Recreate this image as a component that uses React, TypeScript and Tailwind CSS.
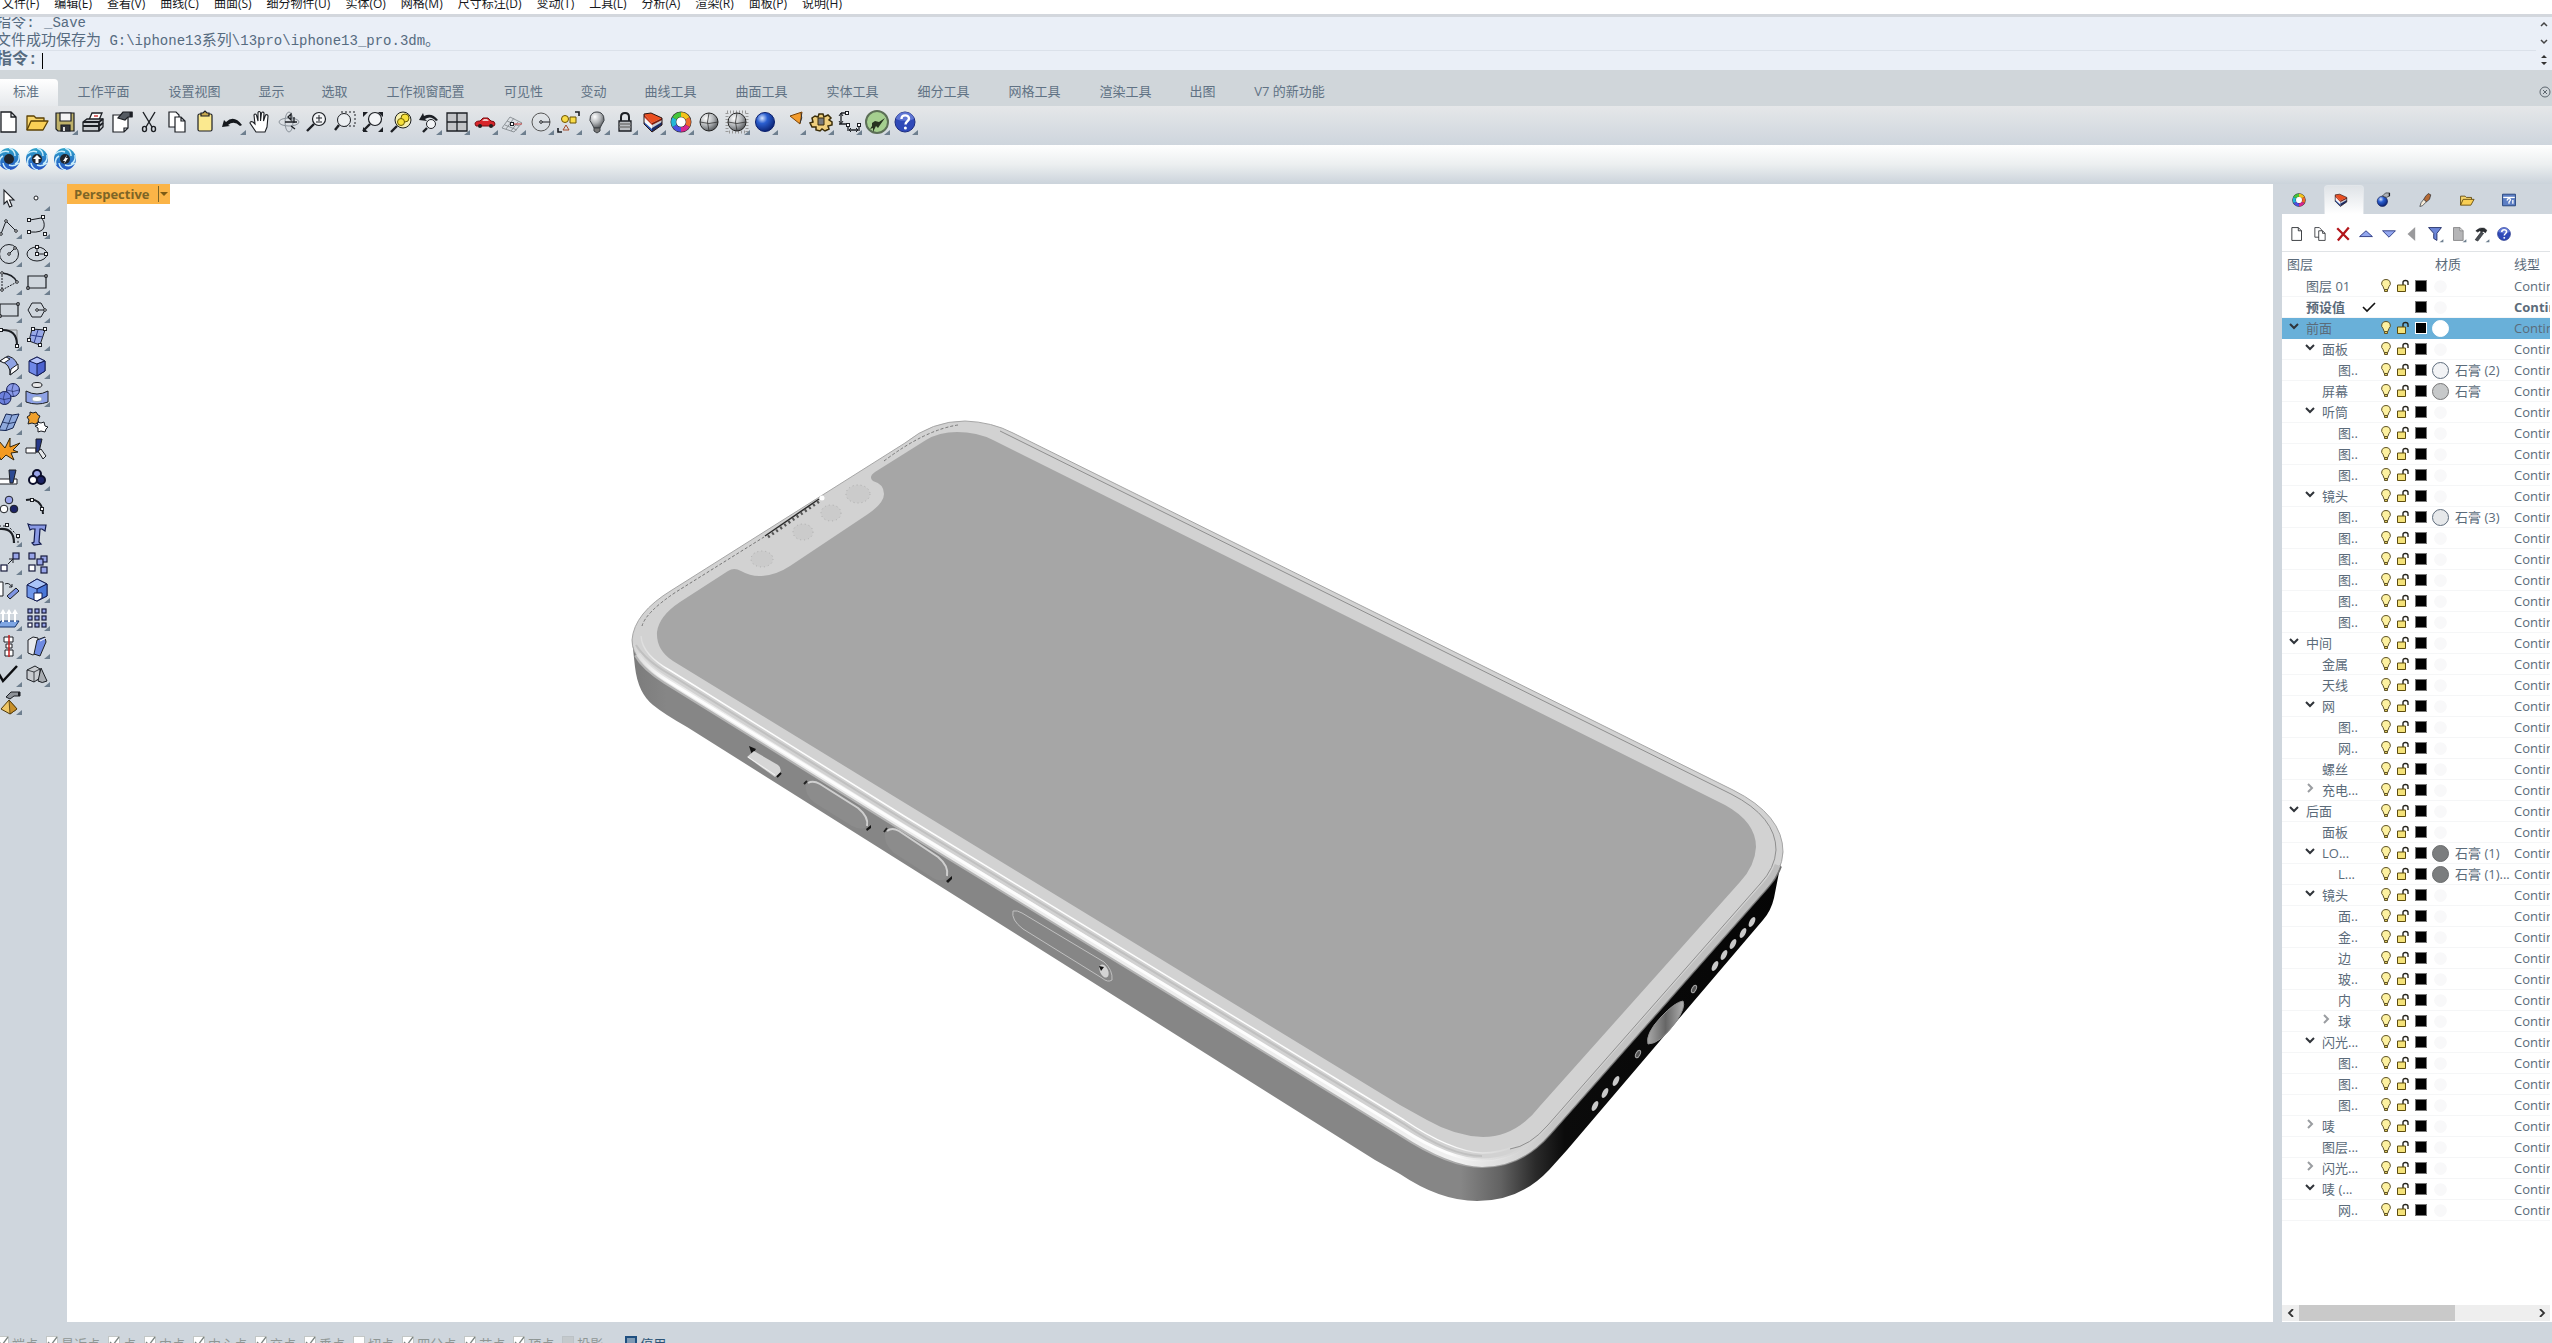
import type { ReactNode } from "react";

const INK = "#1c1f24";

type IconMap = Record<string, ReactNode>;

const page = (
  <path d="M6 4h10l5 5v15H6z M16 4v5h5" fill="#fff" stroke={INK} strokeWidth="1.3" />
);
const colorRing = (
  <g fill="none" strokeWidth="4.5">
    <circle cx="14" cy="14" r="7.5" stroke="#333" strokeWidth="6" />
    <path d="M14 6.500A7.500 7.500 0 0 1 20.500 10.250" stroke="#f3c21b" />
    <path d="M20.500 10.250A7.500 7.500 0 0 1 20.500 17.750" stroke="#ef6a2a" />
    <path d="M20.500 17.750A7.500 7.500 0 0 1 14 21.500" stroke="#d8268e" />
    <path d="M14 21.500A7.500 7.500 0 0 1 7.500 17.750" stroke="#4c4fe0" />
    <path d="M7.500 17.750A7.500 7.500 0 0 1 7.500 10.250" stroke="#25b7d8" />
    <path d="M7.500 10.250A7.500 7.500 0 0 1 14 6.500" stroke="#45c53a" />
    <circle cx="14" cy="14" r="4.500" fill="#fff" stroke="none" />
  </g>
);
const layersIcon = (
  <g strokeLinejoin="round">
    <path d="M5 6l8 9v9l-8-8z" fill="#2c55ae" />
    <path d="M5 6l8 9v6l-8-7z" fill="#f6f6f8" />
    <path d="M5 6l8 9v2l-8-8z" fill="#c63316" />
    <path d="M13 15l10-5v7l-10 7z" fill="#1c2c66" />
    <path d="M13 15l10-5v4l-10 6z" fill="#c9ccd4" />
    <path d="M13 15l10-5v2l-10 5z" fill="#7e1a0a" />
    <path d="M5 6l7-1 11 5-10 5z" fill="#ea4f20" />
    <path d="M5 6l7-1 11 5v7l-10 7-8-8z" fill="none" stroke="#2a1512" />
  </g>
);
const folder = (
  <g stroke="#5c4205" strokeWidth="1.3" strokeLinejoin="round">
    <path d="M4 22V8h7l2 2h8v3" fill="#f7d56b" />
    <path d="M4 22l4-9h17l-5 9z" fill="#f9cf55" />
  </g>
);
const helpBall = (
  <g>
    <circle cx="14" cy="14" r="10" fill="#2f49b8" stroke="#1b2c80" />
    <path d="M5 11a9 7 0 0 1 18 0a14 8 0 0 1-18 0z" fill="#7f93e6" opacity=".6" />
    <path d="M10.500 11c0-5 7.500-4.500 7.500-.500 0 3-3.500 2.500-3.500 6" fill="none" stroke="#fff" strokeWidth="2.400" />
    <circle cx="14.400" cy="20" r="1.500" fill="#fff" />
  </g>
);
const shadedBall = (
  <g>
    <circle cx="14" cy="14" r="9" fill="url(#ballGray)" stroke="#222" />
    <path d="M5 14q9 3 18 0M14 5q-3 9 0 18" fill="none" stroke="#333" strokeWidth=".8" />
  </g>
);
const lens = (
  <g fill="none" stroke={INK}>
    <circle cx="16" cy="11" r="6.500" fill="#f2f4f6" strokeWidth="1.200" />
    <path d="M11 16l-7 7" strokeWidth="2.400" />
  </g>
);
const aperture = (hub: ReactNode) => (
  <g>
    <circle cx="14" cy="14" r="11" fill="url(#apertureBlue)" />
    <path
      d="M14 3q6 2 6 8M24 10q1 6-4 9M24 18q-5 4-10 2M15 25q-6-1-7-7M5 20q-2-6 3-9M4 9q5-4 10-2"
      fill="none"
      stroke="#c8ecfb"
      strokeWidth="1.500"
    />
    <circle cx="14" cy="14" r="5" fill="#20262e" />
    {hub}
  </g>
);
const node = (x: number, y: number) => (
  <rect key={`${x}-${y}`} x={x - 1.5} y={y - 1.5} width="3" height="3" fill="#fff" stroke={INK} />
);
const dot = (x: number, y: number) => (
  <circle key={`${x}-${y}`} cx={x} cy={y} r="1.300" fill="#fff" stroke={INK} />
);
const cell = (x: number, y: number, fill: string, size = 5) => (
  <rect key={`${x}-${y}`} x={x} y={y} width={size} height={size} fill={fill} stroke="#161a3c" strokeWidth="1.200" />
);

const icons: IconMap = {
  new: page,
  open: folder,
  save: (
    <g stroke={INK} strokeWidth="1.200">
      <path d="M5 5h18v18H7l-2-2z" fill="#bfb26a" />
      <path d="M9 5h11v8H9z" fill="#f4f4f4" />
      <path d="M10 17h9v6h-9z" fill="#33363c" />
      <path d="M12 19h2v4h-2z" fill="#ddd" stroke="none" />
    </g>
  ),
  print: (
    <g stroke={INK} strokeWidth="1.300">
      <path d="M10 12l3-7h10l-3 7z" fill="#fff" />
      <path d="M15 8h4" stroke="#c22" />
      <path d="M4 14l4-3h16v8l-4 4H4z" fill="#c8ccd0" />
      <path d="M4 14h16v9M20 14l4-3M4 18h16l4-3" fill="none" strokeWidth="1.800" />
    </g>
  ),
  props: (
    <g stroke={INK} strokeWidth="1.200">
      <path d="M6 7h15v13l-4 4H6z M21 20h-4v4" fill="#fff" />
      <path d="M11 10l5-6h9v5h-4l-3 3z" fill="#555b62" />
      <path d="M24 4v5" strokeWidth="3" />
    </g>
  ),
  cut: (
    <g fill="none" stroke={INK} strokeWidth="1.400">
      <path d="M8 4l9 15M20 4l-9 15" />
      <ellipse cx="9.500" cy="21" rx="2" ry="2.600" />
      <ellipse cx="18.500" cy="21" rx="2" ry="2.600" />
    </g>
  ),
  copy: (
    <g fill="#fff" stroke={INK} strokeWidth="1.200">
      <path d="M6 4h7l3 3v12H6z" />
      <path d="M12 9h6l4 4v11H12z M18 9v4h4" />
    </g>
  ),
  paste: (
    <g stroke={INK} strokeWidth="1.200">
      <rect x="7" y="6" width="14" height="17" rx="1.500" fill="#fbe98f" />
      <path d="M10 8V5h2l2-2 2 2h2v3z" fill="#c9a94e" />
    </g>
  ),
  undo: <path d="M3 19l2-7 2 2q8-8 16 3l-2 1q-6-6-12-1l2 1z" fill="#15181d" />,
  hand: (
    <path
      d="M9 24l-6-9q0-2 3-1l2 2L7 7q1-2 2.500 0l1.500 6V4.500q1-2 2.500 0V13l1-8q1.500-2 2.500 0l-.5 8 2-6q2-1 2.500 1L20 19l-2 5z"
      fill="#fff"
      stroke={INK}
      strokeWidth="1.100"
    />
  ),
  rotate: (
    <g fill="none" stroke="#8b939b">
      <ellipse cx="14" cy="14" rx="10" ry="4" />
      <ellipse cx="14" cy="14" rx="4" ry="10" />
      <path d="M13 9l3-3v6zM19 15v-6M16 18l4 3M10 14h12" stroke={INK} strokeWidth="1.300" />
    </g>
  ),
  zoomInOut: (
    <g>
      {lens}
      <path d="M13 10h6M16 7v6M13 14h6" stroke={INK} />
    </g>
  ),
  zoomWindow: (
    <g>
      <path d="M10 4h14v14H12" fill="none" stroke={INK} strokeDasharray="2 2" />
      <g fill="none" stroke={INK}>
        <circle cx="13" cy="12" r="6.500" fill="#eceff2" />
        <path d="M8 17l-4 5" strokeWidth="2.400" />
      </g>
    </g>
  ),
  zoomExtents: (
    <g>
      {lens}
      <path d="M4 4h5L4 9zM24 4v5l-5-5zM24 24h-5l5-5zM4 24v-5l5 5z" fill={INK} />
    </g>
  ),
  zoomSelected: (
    <g>
      <g fill="none" stroke={INK}>
        <circle cx="16" cy="12" r="8" fill="#f6efae" />
        <path d="M10 18l-6 6" strokeWidth="2.400" />
      </g>
      <g fill="#f7e03a" stroke="#6b5c00">
        <circle cx="18" cy="10" r="4" />
        <circle cx="14" cy="14" r="3.500" />
      </g>
    </g>
  ),
  zoomBack: (
    <g fill="none" stroke={INK}>
      <path d="M4 12l4-7 1 3q8-4 14 4l-2 1q-5-6-11-2l2 2z" fill={INK} stroke="none" />
      <circle cx="16" cy="16" r="4.500" fill="#f2f4f6" />
      <path d="M12 20l-4 4" strokeWidth="2.400" />
    </g>
  ),
  fourViews: (
    <g stroke={INK} strokeWidth="1.300">
      <path d="M4 5h20v18H4z" fill="#c3c5c8" />
      <path d="M14 5v18M4 14h20" />
    </g>
  ),
  car: (
    <g>
      <path d="M4 16q0-3 5-3l3-3h5l3 3q4 0 4 3l-1 2H5z" fill="#d8262b" stroke="#7a0d11" />
      <path d="M11 13l2-2h3l2 2z" fill="#f3c9c9" />
      <circle cx="9" cy="18" r="2" fill="#222" />
      <circle cx="20" cy="18" r="2" fill="#222" />
    </g>
  ),
  cplane: (
    <g fill="none" stroke="#8e9499">
      <path d="M3 20l8-11 12 6-8 9zM6 17l12 5M8 13l12 5M7 21l8-11M12 23l7-9" />
      <path d="M14 16h9" stroke="#c44" />
      {node(13, 16)}
    </g>
  ),
  setRadius: (
    <g fill="none" stroke="#555">
      <circle cx="14" cy="14" r="9" />
      <path d="M14 14h9" stroke={INK} />
      {dot(14, 14)}
    </g>
  ),
  selection: (
    <g stroke="#6b5200">
      <circle cx="10" cy="11" r="3.500" fill="#f9dc49" />
      <path d="M15 9h6v6h-6z" fill="#f9dc49" />
      <path d="M11 17l3 5H8z" fill="none" stroke="#a54a2a" />
      <path d="M20 4h4v4M3 20v4h4" fill="none" stroke={INK} strokeWidth="1.600" />
    </g>
  ),
  bulb: (
    <g stroke="#3c4045">
      <path d="M14 4a7 7 0 0 1 5 12l-2 4h-6l-2-4a7 7 0 0 1 5-12z" fill="url(#ballGray)" />
      <path d="M11 20h6v3l-3 2-3-2z" fill="#777" />
    </g>
  ),
  padlock: (
    <g stroke={INK} strokeWidth="1.300">
      <path d="M10 13V9q0-4 4-4t4 4v4" fill="none" strokeWidth="2" />
      <path d="M8 13h12v10H8z" fill="#b9bcc0" />
      <path d="M8 16h12M8 19h12" stroke="#777" />
    </g>
  ),
  layers: layersIcon,
  ring: colorRing,
  shaded: shadedBall,
  shadedSel: (
    <g>
      <path d="M4 4h20v20H4z" fill="none" stroke="#999" strokeDasharray="1 2" strokeWidth="3" />
      {shadedBall}
    </g>
  ),
  rendered: <circle cx="14" cy="14" r="9.500" fill="url(#ballBlue)" stroke="#0b1f6d" />,
  spot: (
    <g>
      <path d="M11 8l12-4-2 12z" fill="#f39c2d" stroke="#7b4306" />
      <path d="M22 5q2 5-1 10" fill="none" stroke="#333" />
    </g>
  ),
  gear: (
    <g>
      <path
        d="M12 6h4l1 3 4-2 3 3-2 2 3 2v3l-4 1 1 3-4 2-3-2-2 2-4-1v-3H5l-2-4 3-1-1-4 3-2 3 1z"
        fill="#efcf7d"
        stroke="#3a2d0a"
        strokeWidth="1.500"
      />
      <path d="M11 10h6v7h-6z" fill="#77797c" stroke="#3a2d0a" />
    </g>
  ),
  dims: (
    <g fill="none" stroke={INK}>
      <path d="M6 5h6M6 5v11M13 17v6M24 17v6M4 16h9M14 22h9" strokeWidth="1.300" />
      <path d="M4 8l2-3 2 3M4 13l2 3 2-3M16 20l-2 2 2 2M21 20l2 2-2 2" />
      {node(12, 5)}
      {node(13, 17)}
      {node(24, 17)}
    </g>
  ),
  grasshopper: (
    <g>
      <circle cx="14" cy="14" r="11" fill="#a5cf8f" stroke="#5c6f56" strokeWidth="2" />
      <path d="M9 15l3-2 4 1 6-4-5 7-2 3-2-2-3 6v-4l-3 1 2-3z" fill="#26331f" />
    </g>
  ),
  help: helpBall,
  vrayA: aperture(null),
  vrayB: aperture(<path d="M14 10l4 4h-2.500v4h-3v-4H10z" fill="#fff" />),
  vrayC: aperture(<path d="M16 10l-4 6h2l-1 3 4-6h-2z" fill="#fff" />),

  cursor: <path d="M9 6v14l3-3 2.500 6 2.500-1-2.500-6h4.500z" fill="#fff" stroke={INK} strokeWidth="1.100" />,
  point: (
    <circle cx="13" cy="14" r="2" fill="#fff" stroke={INK} />
  ),
  polyline: (
    <g fill="none" stroke={INK}>
      <path d="M6 22l5-13 10 10" />
      {dot(6, 22)}
      {dot(11, 9)}
      {dot(21, 19)}
    </g>
  ),
  curve: (
    <g fill="none" stroke={INK}>
      <path d="M7 8l11-2q4 3 3 9-1 6-14 5" />
      {node(6, 8)}
      {node(20, 5)}
      {node(6, 20)}
      {node(22, 22)}
    </g>
  ),
  circle: (
    <g fill="none" stroke={INK}>
      <circle cx="14" cy="14" r="9.500" />
      <path d="M14 14l6-6" />
      {dot(14, 14)}
      {dot(20, 8)}
    </g>
  ),
  ellipse: (
    <g fill="none" stroke={INK}>
      <ellipse cx="14" cy="14" rx="10" ry="7" />
      <path d="M14 7v7h9" />
      {node(14, 7)}
      {node(14, 14)}
      {node(23, 14)}
    </g>
  ),
  arc: (
    <g fill="none" stroke={INK}>
      <path d="M7 5q11 1 15 9" strokeWidth="1.500" />
      <path d="M22 14L7 22V5" strokeDasharray="2 1" />
      {dot(7, 5)}
      {dot(22, 14)}
      {dot(7, 22)}
    </g>
  ),
  rect: (
    <g fill="none" stroke={INK} strokeWidth="1.200">
      <path d="M5 8h18v12H5z" />
      {dot(23, 8)}
      {dot(5, 20)}
    </g>
  ),
  polygon: (
    <g fill="none" stroke={INK}>
      <path d="M5 14l4-7h9l4 7-4 7H9z" />
      <path d="M14 14h8" />
      {dot(14, 14)}
      {dot(22, 14)}
    </g>
  ),
  fillet: (
    <g fill="none" stroke={INK}>
      <path d="M6 6h16v16" stroke="#888" />
      <path d="M6 6q16-1 16 15" strokeWidth="2" />
      {node(6, 6)}
      {node(22, 22)}
    </g>
  ),
  surface: (
    <g stroke={INK}>
      <path d="M9 5l13 1-5 15-11-4z" fill="#98a8e6" />
      <path d="M15 6l-4 13M7 11l13 2" stroke="#2b3a8a" />
      {node(10, 5)}
      {node(22, 5)}
      {node(6, 16)}
      {node(17, 21)}
    </g>
  ),
  sweep: (
    <g stroke={INK}>
      <path d="M5 9l8-5q10 3 10 13l-8 6q1-11-10-14z" fill="#8fa3e4" />
      <path d="M5 9l6-4 4 2-6 4zM16 17l7-5v5l-8 6z" fill="#fff" />
    </g>
  ),
  box: (
    <g stroke="#131c52">
      <path d="M6 9l8-4 8 4v10l-8 5-8-4z" fill="#6f88e8" />
      <path d="M6 9l8-4 8 4-8 3z" fill="#b8c6fa" />
      <path d="M14 12l8-3v10l-8 5z" fill="#4d63cf" />
    </g>
  ),
  spheres: (
    <g stroke="#131c52">
      <circle cx="18" cy="10" r="6.500" fill="#8a9ae8" />
      <circle cx="9.500" cy="18" r="6.500" fill="#6c80dc" />
      <path d="M3 18q6 3 13 0M10 11.500q-3 6 0 13M12 10q6 3 12 0M18.500 3.500q-3 6 0 13" fill="none" strokeWidth=".6" />
    </g>
  ),
  cylinder: (
    <g stroke={INK}>
      <ellipse cx="14" cy="5" rx="5" ry="2.500" fill="#e8e8e8" />
      <path d="M3 11q11 6 22 0v11q-11 4-22 0z" fill="#8ea2e6" />
      <ellipse cx="14" cy="19" rx="5" ry="2.500" fill="#fff" stroke="#9ab" />
    </g>
  ),
  meshPatch: (
    <g stroke="#12224e" fill="#8ea9dc">
      <path d="M11 6q6 2 13 0l-6 14q-7 4-14 2z" />
      <path d="M17 7l-6 15M7 14q7 3 14 0" fill="none" strokeWidth=".8" />
    </g>
  ),
  puzzle: (
    <g stroke={INK}>
      <path d="M7 4l3 1 3-1 2 3 2 1-2 4 1 3-4 1-3-1-4 1 1-4-2-3 3-2z" fill="#f0a02b" />
      <path d="M14 14l4 1 3-1 1 4 3 1-2 2-1 3-4-1-3 1v-4l-3-2 3-1z" fill="#fff" />
    </g>
  ),
  explode: <path d="M4 5l6 7 5-10v9l10-4-7 7 5 2-7 1 3 7-8-5-5 5-4-8z" fill="#f39a22" stroke="#2f2208" />,
  joinBlue: (
    <g stroke={INK}>
      <path d="M3 12h10v5H3z" fill="#fff" />
      <path d="M13 3h6l-3 13h-3z" fill="#26388a" />
      <path d="M15 15l3-2 5 7-3 3z" fill="#e6e8ea" />
    </g>
  ),
  trim: (
    <g stroke={INK}>
      <path d="M4 15h18v5H4z" fill="#fff" />
      <path d="M14 6h7l-3 13h-3z" fill="#2c4a92" />
    </g>
  ),
  group: (
    <g stroke="#0c0f2c" strokeWidth="2">
      <circle cx="14" cy="10" r="4" fill="#9aa5ea" />
      <circle cx="18" cy="16" r="4" fill="#1d2466" />
      <circle cx="10" cy="16" r="4" fill="#fff" />
    </g>
  ),
  ungroup: (
    <g stroke={INK}>
      <circle cx="14" cy="8" r="3.800" fill="#9aa5ea" />
      <circle cx="9" cy="17" r="3.800" fill="#fff" />
      <circle cx="19" cy="17" r="3.800" fill="#1d2466" />
    </g>
  ),
  editPts: (
    <g fill="none" stroke={INK}>
      <path d="M3 8q16-3 17 14" strokeWidth="2" />
      {node(9, 8)}
      {node(19, 17)}
    </g>
  ),
  ctrlPts: (
    <g fill="none" stroke={INK}>
      <path d="M5 9q14-1 14 14" strokeWidth="2.200" />
      <path d="M4 6h9l10 10v9" strokeDasharray="2 2" />
      {node(12, 5)}
      {node(23, 16)}
    </g>
  ),
  text: (
    <path
      d="M5 4l3 1h15l-1 6-3-2h-2l-1 13 2 2-7 1-2-2 2-1 1-13H9l-2 1z"
      fill="#8a9ae4"
      stroke="#111a4c"
      strokeWidth="1.200"
    />
  ),
  move: (
    <g>
      {cell(18, 5, "#98a5e8", 6)}
      {cell(6, 17, "#fff", 6)}
      <path d="M13 16l5-5m-4 0h4v4" fill="none" stroke={INK} />
    </g>
  ),
  copies: (
    <g>
      {cell(6, 5, "#98a5e8", 6)}
      {cell(18, 8, "#98a5e8", 6)}
      {cell(14, 11, "#98a5e8", 6)}
      {cell(6, 17, "#fff", 6)}
      {cell(18, 19, "#98a5e8", 6)}
    </g>
  ),
  orient: (
    <g stroke={INK}>
      <path d="M4 6h4v14H4z" fill="#fff" />
      <path d="M10 8q4-2 7 3m-3 0h3V8" fill="none" />
      <path d="M12 20l9-8 3 3-9 8z" fill="#7f95e2" />
    </g>
  ),
  boxEdit: (
    <g stroke="#131c52">
      <path d="M4 9l10-6 10 5v12l-10 5-10-4z" fill="#6f97ea" />
      <path d="M4 9l10-6 10 5-10 5z" fill="#a9c4f8" />
      <path d="M14 13l10-5v12l-10 5z" fill="#4876d8" />
      <path d="M11 17h8v5l-5 3-3-1z" fill="#fff" />
    </g>
  ),
  extrude: (
    <g>
      <path d="M6 17h18l-4 6H3z" fill="#7ea6e4" stroke="#13336e" />
      <path d="M8 18V9M14 18V9M20 18V9" stroke="#fff" strokeWidth="2" />
      <path d="M5 10l3-5 3 5zM11 10l3-5 3 5zM17 10l3-5 3 5z" fill="#fff" />
    </g>
  ),
  array: (
    <g>
      {[5, 12, 19].map((y) => [5, 12, 19].map((x) => cell(x, y, x === 5 && y === 19 ? "#fff" : "#98a5e8", 4)))}
    </g>
  ),
  align: (
    <g stroke={INK}>
      <path d="M9 5h9v5H9zM11 12h6v4h-6zM10 18h8v6h-8z" fill="#fff" />
      <path d="M14 3v22" stroke="#c92020" strokeWidth="1.500" />
    </g>
  ),
  shear: (
    <g stroke={INK}>
      <path d="M5 8l5-3 5 1v14l-5 3-5-2z" fill="#e8eaee" />
      <path d="M14 8l8-3 1 5-6 14-6-2z" fill="#6f8be2" />
      <path d="M17 9l6-3" stroke="#fff" />
    </g>
  ),
  check: <path d="M4 14l4 7L22 6" fill="none" stroke="#0c0d10" strokeWidth="2.500" />,
  solids: (
    <g stroke={INK}>
      <path d="M4 10l8-4 5 3v9l-6 4-7-3z" fill="#c9ccd0" />
      <path d="M4 10l7 2 6-3M11 12v10" fill="none" strokeWidth=".8" />
      <path d="M18 8l6 13q-5 3-9 0z" fill="#a9adb2" />
    </g>
  ),
  pyramid: (
    <g>
      <path d="M6 21l8-9 8 9-7 5z" fill="#f0c766" stroke="#4d370a" />
      <path d="M14 12l8 9-7 5z" fill="#c8902a" stroke="#4d370a" strokeWidth=".8" />
      <path d="M11 9l5-5h9v4h-6l-4 3z" fill="#8d9298" stroke={INK} />
      <path d="M24 4v4" stroke={INK} strokeWidth="2" />
    </g>
  ),

  material: (
    <g>
      <circle cx="13" cy="16" r="8" fill="url(#ballBlue)" stroke="#101b55" />
      <path d="M13 8l5-5h6v5l-5 2z" fill="#aeb2b7" stroke={INK} />
      <path d="M24 3v5" stroke={INK} strokeWidth="2" />
    </g>
  ),
  brush: (
    <g stroke={INK}>
      <path d="M19 4l4 2-2 7-5 4-4-4 3-5z" fill="#b56a35" />
      <path d="M12 13l4 4-6 6-4 1 2-6z" fill="#f4ead8" />
    </g>
  ),
  helpPane: (
    <g>
      <path d="M4 5h20v18H4z" fill="#5d7fc4" stroke="#26467f" strokeWidth="1.500" />
      <path d="M5 10h18" stroke="#fff" strokeWidth="2" />
      <path d="M11 15q1-4 4-3t-1 5v3M20 14v6" stroke="#fff" fill="none" strokeWidth="2" />
    </g>
  ),
  del: <path d="M5 5l18 18M23 4L6 24" stroke="#b3161b" strokeWidth="3.500" />,
  up: <path d="M4 18l10-9 10 9z" fill="#93a7ee" stroke="#1c2a78" strokeWidth="1.300" />,
  down: <path d="M4 9h20l-10 10z" fill="#93a7ee" stroke="#1c2a78" strokeWidth="1.300" />,
  left: <path d="M19 3v22L7 14z" fill="#9a9a9c" />,
  filter: <path d="M4 4h20l-7 9v11l-5-3v-8z" fill="#6d87d8" stroke="#16225c" strokeWidth="1.300" />,
  pageGray: <path d="M7 4h10l5 5v15H7z M17 4v5h5" fill="#b5b5b7" stroke="#7f8082" strokeWidth="1.300" />,
  hammer: (
    <g stroke={INK}>
      <path d="M6 9q6-6 13-4l4 3-2 4-3-2-3 1-3-2-3 2z" fill="#2a2d31" />
      <path d="M14 11l4 2-9 12-4-2z" fill="#4b5056" />
    </g>
  ),
};

const Glyph = ({ name, size = 28, corner = false }: { name: string; size?: number; corner?: boolean }) => (
  <svg viewBox="0 0 28 28" width={size} height={size} className="shrink-0" aria-hidden="true">
    {icons[name]}
    {corner && <path d="M27 22v5h-6z" fill="#6e7f8f" />}
  </svg>
);

const menus = [
  "文件(F)", "编辑(E)", "查看(V)", "曲线(C)", "曲面(S)", "细分物件(U)", "实体(O)", "网格(M)",
  "尺寸标注(D)", "变动(T)", "工具(L)", "分析(A)", "渲染(R)", "面板(P)", "说明(H)",
];

const W2 = "w-[63px]";
const W3 = "w-[77px]";
const W4 = "w-[91px]";
const tabs: [string, string][] = [
  ["工作平面", W4], ["设置视图", W4], ["显示", W2], ["选取", W2], ["工作视窗配置", "w-[119px]"],
  ["可见性", W3], ["变动", W2], ["曲线工具", W4], ["曲面工具", W4], ["实体工具", W4],
  ["细分工具", W4], ["网格工具", W4], ["渲染工具", W4], ["出图", W2], ["V7 的新功能", "w-[111px]"],
];

const mainTools: [string, string, boolean?][] = [
  ["new", "新建"], ["open", "打开"], ["save", "保存", true], ["print", "打印"], ["props", "文件属性"],
  ["cut", "剪切"], ["copy", "复制"], ["paste", "粘贴"], ["undo", "复原", true], ["hand", "平移"],
  ["rotate", "旋转视图"], ["zoomInOut", "缩放"], ["zoomWindow", "框选缩放"], ["zoomExtents", "缩放至最大范围"],
  ["zoomSelected", "缩放至选取物件"], ["zoomBack", "复原视图", true], ["fourViews", "四个视图", true],
  ["car", "设置视图", true], ["cplane", "工作平面", true], ["setRadius", "物件锁点", true],
  ["selection", "选取", true], ["bulb", "隐藏", true], ["padlock", "锁定", true], ["layers", "图层", true],
  ["ring", "颜色", true], ["shaded", "着色"], ["shadedSel", "着色选取物件", true], ["rendered", "渲染", true],
  ["spot", "灯光", true], ["gear", "选项", true], ["dims", "尺寸标注", true],
  ["grasshopper", "Grasshopper", true], ["help", "说明", true],
];

const sideTools: [string, boolean][] = [
  ["cursor", false], ["point", true], ["polyline", true], ["curve", true], ["circle", true], ["ellipse", true],
  ["arc", true], ["rect", true], ["rect", true], ["polygon", true], ["fillet", true], ["surface", true],
  ["sweep", true], ["box", true], ["spheres", true], ["cylinder", true], ["meshPatch", true], ["puzzle", false],
  ["explode", false], ["joinBlue", false], ["trim", false], ["group", true], ["ungroup", false], ["editPts", false],
  ["ctrlPts", true], ["text", false], ["move", true], ["copies", false], ["orient", false], ["boxEdit", true],
  ["extrude", true], ["array", true], ["align", true], ["shear", true], ["check", true], ["solids", true],
  ["pyramid", true],
];

type Layer = {
  name: string;
  level: 0 | 1 | 2;
  open?: boolean;
  current?: boolean;
  selected?: boolean;
  material?: string;
  tint?: string;
};

const leaf = (name: string, level: 0 | 1 | 2, extra: Partial<Layer> = {}): Layer => ({ name, level, ...extra });

const layers: Layer[] = [
  leaf("图层 01", 0),
  leaf("预设值", 0, { current: true }),
  leaf("前面", 0, { open: true, selected: true, tint: "border-white bg-white" }),
  leaf("面板", 1, { open: true }),
  leaf("图..", 2, { material: "石膏 (2)", tint: "border-[#5e6c7c] bg-[#f2f3f5]" }),
  leaf("屏幕", 1, { material: "石膏", tint: "border-[#777] bg-[#c6c8c9]" }),
  leaf("听筒", 1, { open: true }),
  leaf("图..", 2), leaf("图..", 2), leaf("图..", 2),
  leaf("镜头", 1, { open: true }),
  leaf("图..", 2, { material: "石膏 (3)", tint: "border-[#5e6c7c] bg-[#e6e8ea]" }),
  leaf("图..", 2), leaf("图..", 2), leaf("图..", 2), leaf("图..", 2), leaf("图..", 2),
  leaf("中间", 0, { open: true }),
  leaf("金属", 1), leaf("天线", 1),
  leaf("网", 1, { open: true }),
  leaf("图..", 2), leaf("网..", 2),
  leaf("螺丝", 1),
  leaf("充电...", 1, { open: false }),
  leaf("后面", 0, { open: true }),
  leaf("面板", 1),
  leaf("LO...", 1, { open: true, material: "石膏 (1)", tint: "border-[#6b6d6e] bg-[#7b7d7e]" }),
  leaf("L...", 2, { material: "石膏 (1)...", tint: "border-[#6b6d6e] bg-[#7b7d7e]" }),
  leaf("镜头", 1, { open: true }),
  leaf("面..", 2), leaf("金..", 2), leaf("边", 2), leaf("玻..", 2), leaf("内", 2),
  leaf("球", 2, { open: false }),
  leaf("闪光...", 1, { open: true }),
  leaf("图..", 2), leaf("图..", 2), leaf("图..", 2),
  leaf("唛", 1, { open: false }),
  leaf("图层...", 1),
  leaf("闪光...", 1, { open: false }),
  leaf("唛 (...", 1, { open: true }),
  leaf("网..", 2),
];

const indent = ["pl-0", "pl-4", "pl-8"];

const snaps: [string, boolean][] = [
  ["端点", true], ["最近点", true], ["点", true], ["中点", true], ["中心点", true], ["交点", true],
  ["垂点", true], ["切点", false], ["四分点", true], ["节点", true], ["顶点", true],
];

function Twisty({ open }: { open?: boolean }) {
  return (
    <span className="flex h-5 w-6 shrink-0 items-center justify-center">
      {open !== undefined && (
        <svg viewBox="0 0 10 10" className="mb-1 size-2.5" fill="none" strokeWidth="2" aria-hidden="true">
          {open ? <path d="M1 3l4 4 4-4" stroke="#30343a" /> : <path d="M3 1l4 4-4 4" stroke="#9a9da1" />}
        </svg>
      )}
    </span>
  );
}

const LayerBulb = () => (
  <svg viewBox="0 0 16 16" className="mx-auto size-4" aria-hidden="true">
    <path d="M8 1.500a4 4 0 0 1 3 7l-1.200 3H6.200L5 8.500a4 4 0 0 1 3-7z" fill="#fdf1a0" stroke="#5f5326" />
    <path d="M6.500 11.500h3v2h-3z" fill="#e5cf60" stroke="#5f5326" />
  </svg>
);
const LayerLock = () => (
  <svg viewBox="0 0 16 16" className="mx-auto size-4" aria-hidden="true">
    <path d="M8 7V4.500q0-2 2.500-2T13 4.500V7" fill="none" stroke="#26241c" strokeWidth="1.400" />
    <path d="M2.500 7h8v6.500h-8z" fill="#f4e27a" stroke="#5d4c0c" />
  </svg>
);

function LayerTable() {
  return (
    <table className="w-full table-fixed border-separate border-spacing-0 text-left text-[13px] leading-5 text-[#5b6b7a]">
      <colgroup>
        <col className="w-20" />
        <col className="w-4" />
        <col className="w-4" />
        <col className="w-[18px]" />
        <col className="w-[17px]" />
        <col className="w-[82px]" />
        <col />
      </colgroup>
      <thead>
        <tr className="h-6">
          <th className="p-0 pl-[5px] font-normal">图层</th>
          <th className="p-0" />
          <th className="p-0" />
          <th className="p-0" />
          <th className="p-0" />
          <th className="p-0 pl-1.5 font-normal">材质</th>
          <th className="overflow-hidden p-0 pl-[3px] font-normal whitespace-nowrap">线型</th>
        </tr>
      </thead>
      <tbody>
        {layers.map((l, i) => (
          <tr
            key={i}
            className={
              l.selected ? "bg-[#69b0d9] [&>td]:border-[#69b0d9]" : l.current ? "font-bold [&>td]:border-[#f5f6f7]" : "[&>td]:border-[#f5f6f7]"
            }
          >
            <td className="h-[21px] border-b p-0">
              <div className={`flex h-5 items-center whitespace-nowrap ${indent[l.level]}`}>
                <Twisty open={l.open} />
                {l.name}
              </div>
            </td>
            <td className="border-b p-0">
              {l.current && (
                <svg viewBox="0 0 14 12" className="h-3 w-3.5" aria-hidden="true">
                  <path d="M1 6l4 4 8-8" fill="none" stroke="#111" strokeWidth="1.600" />
                </svg>
              )}
            </td>
            <td className="border-b p-0">{!l.current && <LayerBulb />}</td>
            <td className="border-b p-0">{!l.current && <LayerLock />}</td>
            <td className="border-b p-0">
              <span className={`mx-auto block size-3 border bg-black ${l.selected ? "border-white" : "border-[#777]"}`} />
            </td>
            <td className="border-b p-0">
              <div className="flex h-5 items-center gap-1.5 pl-[3px] whitespace-nowrap">
                <span className={`size-[17px] shrink-0 rounded-full ${l.tint ? `border ${l.tint}` : "scale-75 bg-[#f8f8f9]"}`} />
                {l.material}
              </div>
            </td>
            <td className="overflow-hidden border-b p-0 pl-[3px] text-clip whitespace-nowrap">Continuous</td>
          </tr>
        ))}
      </tbody>
    </table>
  );
}

const SCREEN =
  "M657 632Q659 616 680 602L728 571Q734 567 741 571Q750 576 759 576Q775 576 790 566L868 514Q884 503 884 494Q884 484 873 481Q868 477 875 472L926 440Q939 432 957 432Q977 432 993 440L1725 805Q1756 822 1756 847Q1755 866 1740 882L1540 1106Q1516 1137 1483 1137Q1455 1136 1427 1120L1400 1105L900 800L673 661Q656 650 657 632Z";
const FACE =
  "M632 640Q634 613 672 590L905 443Q932 421 965 421Q992 422 1013 433L1733 790Q1783 815 1783 852Q1782 871 1767 888L1549 1135Q1521 1167 1482 1167Q1449 1166 1400 1134L900 828L665 682Q632 661 632 640Z";
const BODY =
  "M632 640L635 667Q638 693 653 705Q664 714 687 727L1375 1160L1400 1174Q1440 1201 1477 1201Q1520 1201 1549 1170L1567 1150L1763 920Q1771 911 1774 898L1783 852L1700 800L900 500Z";
const RIM = "M636 655Q643 668 665 682L900 828L1400 1134Q1449 1166 1482 1166Q1521 1166 1549 1134L1767 887Q1776 877 1780 866";

const speakerHoles: [number, number][] = [
  [1752, 922], [1743, 933], [1733, 944], [1724, 955], [1715, 966], [1616, 1081], [1605, 1093], [1595, 1106],
];

function PhoneModel() {
  return (
    <svg viewBox="67 184 2206 1138" preserveAspectRatio="xMidYMid meet" className="size-full" role="img" aria-label="iphone13_pro">
      <defs>
        <linearGradient id="bodyShade" gradientUnits="userSpaceOnUse" x1="632" x2="1783" y1="0" y2="0">
          <stop offset="0" stopColor="#7b7b7b" />
          <stop offset=".03" stopColor="#868686" />
          <stop offset=".72" stopColor="#868686" />
          <stop offset=".755" stopColor="#626262" />
          <stop offset=".785" stopColor="#2a2a2a" />
          <stop offset=".81" stopColor="#0b0b0b" />
          <stop offset="1" stopColor="#050505" />
        </linearGradient>
        <linearGradient id="rimSoft" gradientUnits="userSpaceOnUse" x1="632" x2="1783" y1="0" y2="0">
          <stop offset="0" stopColor="#b4b4b4" />
          <stop offset=".7" stopColor="#b4b4b4" />
          <stop offset=".8" stopColor="#6e6e6e" />
          <stop offset="1" stopColor="#6e6e6e" />
        </linearGradient>
        <linearGradient id="rimGlow" gradientUnits="userSpaceOnUse" x1="632" x2="1783" y1="0" y2="0">
          <stop offset="0" stopColor="#d6d6d6" />
          <stop offset=".04" stopColor="#e9e9e9" />
          <stop offset=".72" stopColor="#f0f0f0" />
          <stop offset=".8" stopColor="#c6c6c6" />
          <stop offset="1" stopColor="#bdbdbd" />
        </linearGradient>
        <linearGradient id="rimEdge" gradientUnits="userSpaceOnUse" x1="632" x2="1540" y1="0" y2="0">
          <stop offset="0" stopColor="#fdfdfd" stopOpacity="0" />
          <stop offset=".04" stopColor="#fdfdfd" />
          <stop offset=".9" stopColor="#fdfdfd" />
          <stop offset="1" stopColor="#d2d2d2" stopOpacity="0" />
        </linearGradient>
        <linearGradient id="portShade" x1="0" x2="1">
          <stop offset="0" stopColor="#a8a8a8" />
          <stop offset=".5" stopColor="#666" />
          <stop offset="1" stopColor="#b0b0b0" />
        </linearGradient>
        <clipPath id="faceClip">
          <path d={FACE} />
        </clipPath>
      </defs>
      <path d={BODY} fill="url(#bodyShade)" />
      <path d={RIM} fill="none" stroke="url(#rimSoft)" strokeWidth="4" />
      <path d={FACE} fill="#d2d2d2" />
      <path d={FACE} fill="none" stroke="#a6a6a6" />
      <path d={RIM} fill="none" stroke="url(#rimSoft)" strokeWidth="2" />
      <g clipPath="url(#faceClip)" fill="none">
        <path d={RIM} stroke="url(#rimGlow)" strokeWidth="11" />
        <path d="M633 644Q640 664 668 681L902 825L1402 1129Q1450 1160 1482 1160Q1510 1160 1530 1143" stroke="url(#rimEdge)" strokeWidth="3" />
        <path d="M636 645Q646 661 671 675L904 820L1404 1124Q1450 1156 1482 1156" stroke="#c0c0c0" strokeWidth="2" />
        <path d="M641 636Q642 655 671 671L904 816L1404 1120Q1450 1151 1482 1153Q1500 1153 1515 1146" stroke="url(#rimEdge)" strokeWidth="1.500" />
      </g>
      <path
        d="M1000 431L1731 794Q1776 817 1776 850Q1775 868 1760 884L1548 1125Q1530 1146 1510 1149"
        fill="none"
        stroke="#8f8f8f"
      />
      <path d="M642 626Q646 612 676 592L764 537M884 461Q925 430 958 425" fill="none" stroke="#777" strokeDasharray="3 2" />
      <path d={SCREEN} fill="#a6a6a6" />
      <g fill="#cbcbcb" stroke="#adadad" strokeDasharray="1 3">
        <ellipse cx="858" cy="494" rx="12" ry="9" />
        <ellipse cx="831" cy="513" rx="10" ry="8" />
        <ellipse cx="803" cy="532" rx="10" ry="8" />
        <ellipse cx="762" cy="559" rx="11" ry="8" />
      </g>
      <path d="M765 536L819 499" stroke="#2b2b2b" strokeWidth="1.500" />
      <path d="M768 537L821 500" stroke="#555" strokeWidth="3" strokeDasharray="2 3" />
      <circle cx="822" cy="498" r="2.500" fill="#fff" />

      <path d="M749 746l7 3-4 6z" fill="#111" />
      <path d="M747 757l7-6 24 14q4 3 2 8l-5 4z" fill="#d6d6d6" />
      <path d="M748 757l27 18" stroke="#f4f4f4" />
      <path d="M777 777l4-4" stroke="#111" strokeWidth="2" />

      <g fill="#8c8c8c">
        <path d="M806 784Q812 779 820 784L858 808Q870 817 866 827Q862 831 852 826L815 803Q804 795 806 784Z" />
        <path d="M885 831Q891 826 899 831L938 857Q951 866 947 877Q942 883 933 878L894 853Q883 844 885 831Z" />
      </g>
      <g fill="none" stroke="#cfcfcf" strokeWidth="2">
        <path d="M808 783Q813 780 820 784L858 808Q869 817 867 826" />
        <path d="M887 831Q892 827 899 831L938 857Q949 866 947 876" />
      </g>
      <path d="M804 784l3-3M884 832l3-4" stroke="#222" strokeWidth="2" />
      <path d="M866 829l5-4v3l-4 3zM946 881l6-5v3l-4 4z" fill="#141414" />

      <path
        d="M1013 911Q1017 910 1022 913L1104 962Q1113 970 1112 980Q1108 983 1102 978L1023 929Q1011 920 1013 911Z"
        fill="none"
        stroke="#c0c0c0"
      />
      <ellipse cx="1104" cy="971" rx="4" ry="7" transform="rotate(-25 1104 971)" fill="#d4d4d4" />
      <path d="M1099 966l5 1-3 4z" fill="#111" />

      {speakerHoles.map(([x, y]) => (
        <ellipse key={x} cx={x} cy={y} rx="2.500" ry="5.500" transform={`rotate(28 ${x} ${y})`} fill="#c9c9c9" />
      ))}
      {[[1694, 989], [1638, 1054]].map(([x, y]) => (
        <ellipse key={x} cx={x} cy={y} rx="2" ry="4" transform={`rotate(28 ${x} ${y})`} fill="#555" stroke="#aaa" />
      ))}
      <path
        d="M1648 1044Q1645 1034 1661 1017Q1675 1002 1683 1001Q1686 1007 1676 1022Q1660 1044 1648 1044Z"
        fill="url(#portShade)"
        stroke="#8f8f8f"
      />
    </svg>
  );
}

const paneTabs: [string, string][] = [
  ["ring", "属性"], ["layers", "图层"], ["material", "材质"], ["brush", "贴图"], ["open", "图库"], ["helpPane", "说明"],
];
const paneTools: [string, string, boolean?][] = [
  ["new", "新图层"], ["copy", "新子图层"], ["del", "删除"], ["up", "上移"], ["down", "下移"], ["left", "上一层"],
  ["filter", "过滤", true], ["pageGray", "粘贴", true], ["hammer", "工具", true], ["help", "说明"],
];

export default function App() {
  return (
    <div className="flex h-screen flex-col overflow-hidden bg-[#cfd6dd] [font-family:'Open_Sans','Noto_Sans_CJK_SC',sans-serif]">
      <svg className="absolute size-0" aria-hidden="true">
        <defs>
          <radialGradient id="ballGray" cx=".35" cy=".3" r=".8">
            <stop offset="0" stopColor="#fff" />
            <stop offset=".5" stopColor="#b2b5b8" />
            <stop offset="1" stopColor="#44474b" />
          </radialGradient>
          <radialGradient id="ballBlue" cx=".35" cy=".3" r=".8">
            <stop offset="0" stopColor="#d6e4ff" />
            <stop offset=".35" stopColor="#2b5fd0" />
            <stop offset="1" stopColor="#061a66" />
          </radialGradient>
          <linearGradient id="apertureBlue" x1="0" y1="0" x2="0" y2="1">
            <stop offset="0" stopColor="#2fa3c9" />
            <stop offset="1" stopColor="#2454c4" />
          </linearGradient>
        </defs>
      </svg>

      <nav className="flex h-3.5 shrink-0 items-end gap-[15px] overflow-hidden bg-white pl-0.5 text-xs text-[#16181b]">
        {menus.map((m) => (
          <button key={m} className="h-5 leading-5 whitespace-nowrap">
            {m}
          </button>
        ))}
      </nav>

      <section className="flex shrink-0 border-t-[3px] border-[#d3d7dd] bg-[#eaeff7] text-[#566b80]">
        <div className="min-w-0 flex-1 [font-family:'Liberation_Mono','Noto_Sans_CJK_SC',monospace]">
          <div className="flex h-[34px] flex-col justify-end overflow-hidden border-b border-[#dbe1ea] text-sm">
            <p className="-ml-1 h-[18px] shrink-0 leading-[18px] whitespace-pre">
              <span className="text-[15px]">指令: </span>_Save
            </p>
            <p className="-ml-1 h-[18px] shrink-0 leading-[18px] whitespace-pre">
              <span className="text-[15px]">文件成功保存为</span> G:\iphone13<span className="text-[15px]">系列</span>
              \13pro\iphone13_pro.3dm<span className="text-[15px]">。</span>
            </p>
          </div>
          <div className="flex h-[19px] items-center">
            <label htmlFor="command" className="-ml-1 pr-1 text-base leading-[19px] font-bold">
              指令:
            </label>
            <span className="h-4 w-px bg-black" />
            <input id="command" className="h-4 min-w-0 flex-1 bg-transparent text-base outline-none" />
          </div>
        </div>
        <div className="flex w-4 flex-col items-center justify-between py-1">
          {["M1 5l3-3 3 3", "M1 2l3 3 3-3"].map((d) => (
            <svg key={d} viewBox="0 0 8 7" className="h-[7px] w-2" aria-hidden="true">
              <path d={d} fill="none" stroke="#444" strokeWidth="1.500" />
            </svg>
          ))}
          <svg viewBox="0 0 8 12" className="h-3 w-2" aria-hidden="true">
            <path d="M1 4l3-3 3 3zM1 8l3 3 3-3z" fill="#333" />
          </svg>
        </div>
      </section>

      <div className="flex h-9 shrink-0 items-end bg-[#d0d6da] text-[13px] text-[#607284]">
        <button className="h-[27px] w-[58px] rounded-tr-sm bg-linear-to-b from-white to-[#e6e9ec] pb-0.5 pl-[13px] text-left">标准</button>
        {tabs.map(([label, width]) => (
          <button key={label} className={`h-[27px] shrink-0 pb-0.5 whitespace-nowrap ${width}`}>
            {label}
          </button>
        ))}
        <button aria-label="选项" className="mr-px mb-2 ml-auto">
          <svg viewBox="0 0 12 12" className="size-3" fill="none" stroke="#5d666f" aria-hidden="true">
            <circle cx="6" cy="6" r="5" />
            <path d="M4 4l4 4M8 4l-4 4" />
          </svg>
        </button>
      </div>

      <div className="flex h-[39px] shrink-0 items-start bg-linear-to-b from-[#e5e7e9] to-[#ced5dd] pt-0.5">
        <div className="-ml-[5px] flex">
          {mainTools.map(([name, label, corner]) => (
            <button key={name} aria-label={label} className="size-7">
              <Glyph name={name} corner={corner} />
            </button>
          ))}
        </div>
      </div>

      <div className="flex h-[39px] shrink-0 items-start bg-linear-to-b from-white via-[#eceff0] to-[#cbd3db]">
        <div className="-ml-[5px] flex">
          {["vrayA", "vrayB", "vrayC"].map((name) => (
            <button key={name} aria-label={name} className="size-7">
              <Glyph name={name} />
            </button>
          ))}
        </div>
      </div>

      <main className="flex min-h-0 flex-1">
        <aside className="w-[67px] shrink-0 overflow-hidden">
          <div className="-ml-[5px] grid w-14 grid-cols-2">
            {sideTools.map(([name, corner], i) => (
              <button key={i} aria-label={name} className="size-7">
                <Glyph name={name} corner={corner} />
              </button>
            ))}
          </div>
        </aside>

        <section className="relative min-w-0 flex-1 bg-white">
          <PhoneModel />
          <div className="absolute top-0 left-0 flex h-5 items-center bg-[#fbb447] text-[13px] font-bold text-[#7d6526]">
            <button className="h-5 pr-2 pl-[7px] leading-5">Perspective</button>
            <button aria-label="视图选项" className="flex h-4 w-3 items-center justify-center border-l border-[#7d6526]">
              <svg viewBox="0 0 8 4" className="h-1 w-2" aria-hidden="true">
                <path d="M0 0h8L4 4z" fill="#7d5a14" />
              </svg>
            </button>
          </div>
        </section>

        <aside className="ml-[9px] flex w-[270px] shrink-0 flex-col overflow-hidden">
          <div className="flex h-[30px] shrink-0 items-end" role="tablist">
            {paneTabs.map(([name, label]) => (
              <button
                key={name}
                role="tab"
                aria-label={label}
                aria-selected={name === "layers"}
                className={`flex h-[29px] shrink-0 items-center ${
                  name === "layers"
                    ? "mr-0.5 w-10 rounded-t-sm border border-b-0 border-[#e2e6ea] bg-linear-to-b from-[#dfe3e7] to-white pl-[7px]"
                    : "w-[42px] pl-2"
                }`}
              >
                <Glyph name={name} size={18} />
              </button>
            ))}
          </div>
          <div className="flex min-h-0 flex-1 flex-col bg-white pr-0.5">
            <div className="flex h-[38px] shrink-0 items-center border-b border-[#e0e3e6] pt-0.5 pl-[3px]">
              {paneTools.map(([name, label, corner]) => (
                <button key={name} aria-label={label} className="flex w-[23px] items-center justify-center">
                  <Glyph name={name} size={18} corner={corner} />
                </button>
              ))}
            </div>
            <div className="min-h-0 flex-1 overflow-hidden">
              <LayerTable />
            </div>
            <div className="mb-px flex h-4 shrink-0 items-center bg-[#eeeeee]">
              <button aria-label="向左" className="flex w-[17px] justify-center">
                <svg viewBox="0 0 8 8" className="size-2" aria-hidden="true">
                  <path d="M6 0L2 4l4 4" fill="none" stroke="#333" strokeWidth="1.800" />
                </svg>
              </button>
              <div className="flex h-full flex-1">
                <div className="h-full w-2/3 bg-[#c9c9c9]" />
              </div>
              <button aria-label="向右" className="flex w-[17px] justify-center">
                <svg viewBox="0 0 8 8" className="size-2" aria-hidden="true">
                  <path d="M2 0l4 4-4 4" fill="none" stroke="#333" strokeWidth="1.800" />
                </svg>
              </button>
            </div>
          </div>
        </aside>
      </main>

      <footer className="h-[21px] shrink-0 overflow-hidden pt-3.5 text-[13px] text-[#8f9795]">
        <div className="-ml-[3px] flex h-4 gap-2 leading-4">
          {snaps.map(([label, checked]) => (
            <label key={label} className="flex gap-[3px] whitespace-nowrap">
              <span className="grid size-3 place-items-center">
                <input
                  type="checkbox"
                  defaultChecked={checked}
                  className="peer col-start-1 row-start-1 size-3 appearance-none border border-[#c3c7c6] bg-white"
                />
                <svg viewBox="0 0 12 12" className="pointer-events-none invisible col-start-1 row-start-1 size-3 peer-checked:visible" aria-hidden="true">
                  <path d="M2 6l3 3 6-8" fill="none" stroke="#7c8482" strokeWidth="1.300" />
                </svg>
              </span>
              {label}
            </label>
          ))}
          <label className="flex gap-[3px] whitespace-nowrap">
            <input type="checkbox" className="size-3 appearance-none border border-[#bcc2c6] bg-[#c4c9cc]" />
            投影
          </label>
          <label className="ml-3.5 flex gap-[3px] whitespace-nowrap text-[#2d5577]">
            <input type="checkbox" className="size-3 appearance-none border-2 border-[#1f4f80] bg-[#7d9ab5]" />
            停用
          </label>
        </div>
      </footer>
    </div>
  );
}
